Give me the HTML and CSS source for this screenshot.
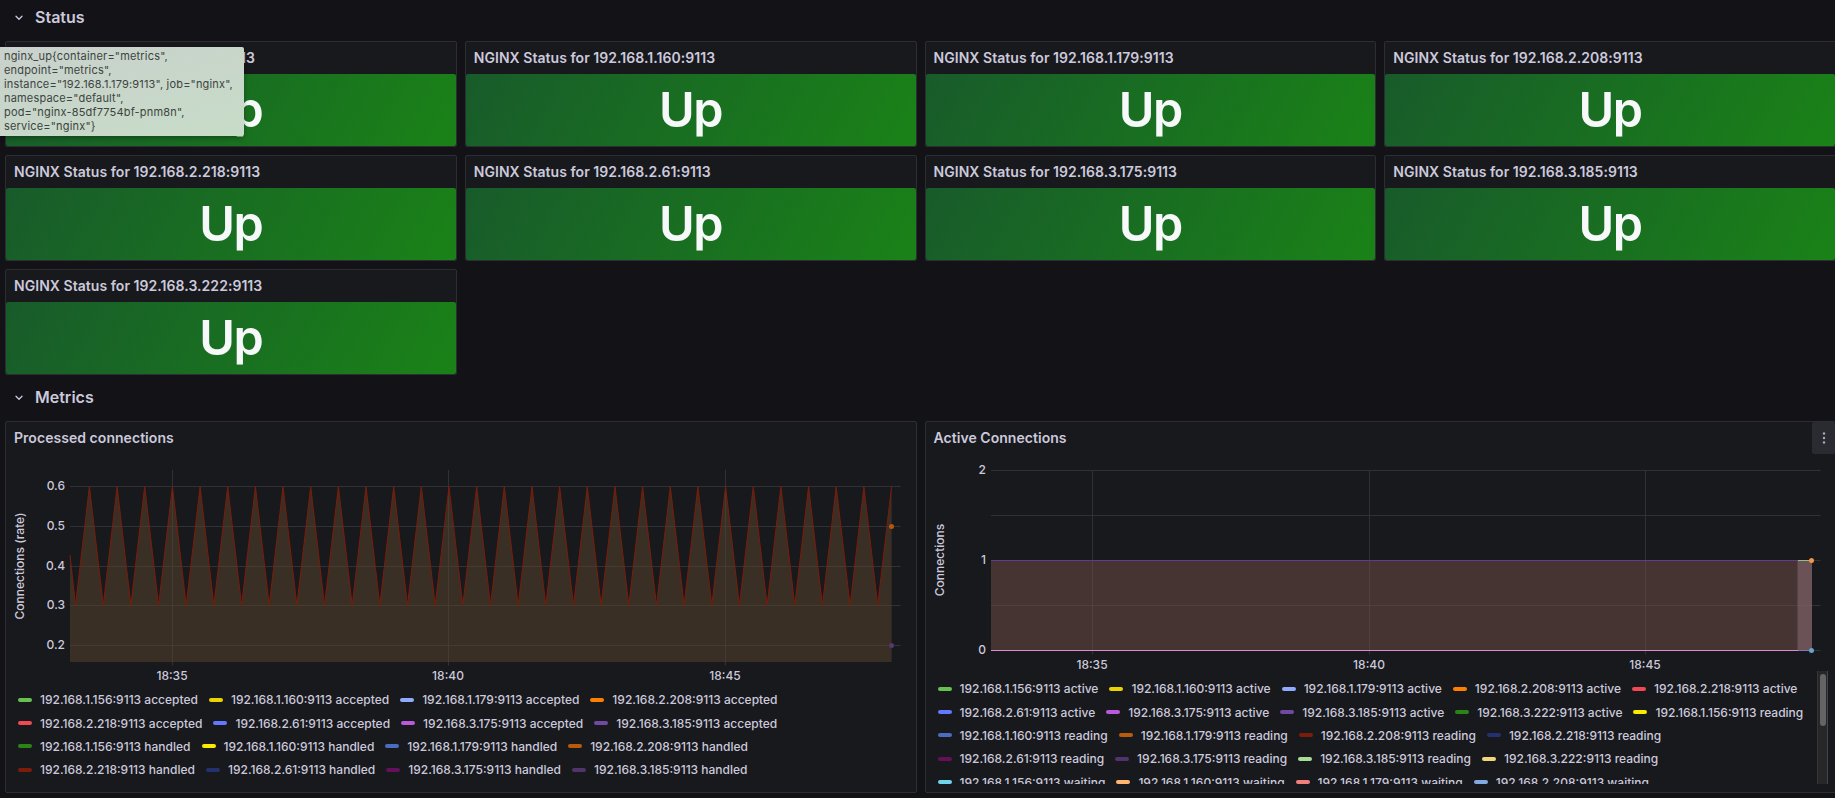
FILE: index.html
```html
<!DOCTYPE html>
<html lang="en">
<head>
<meta charset="utf-8">
<title>NGINX</title>
<link rel="stylesheet" href="styles.css">
</head>
<body>
<main class="dashboard">
  <header class="row-head">
    <svg class="chevron" width="8" height="6" viewBox="0 0 8 6"><path d="M1 1.2 L4 4.2 L7 1.2"/></svg>
    <h2 class="row-title">Status</h2>
  </header>
  <section class="stats" id="stats"></section>
  <header class="row-head row-head-second">
    <svg class="chevron" width="8" height="6" viewBox="0 0 8 6"><path d="M1 1.2 L4 4.2 L7 1.2"/></svg>
    <h2 class="row-title">Metrics</h2>
  </header>
  <section class="charts">
    <article class="panel chart-panel">
      <h3 class="panel-title">Processed connections</h3>
      <svg class="plot" width="910" height="233" viewBox="6 454 910 233">
        <g class="grid">
          <path d="M70 486.5H900.5M70 526.5H900.5M70 566.5H900.5M70 605.5H900.5M70 645.5H900.5"/>
          <path d="M172.5 470V665.5M448.5 470V665.5M725.5 470V665.5"/>
        </g>
        <path class="rate-fill" id="rate-fill"/>
        <path class="rate-line" id="rate-line"/>
        <circle cx="891.5" cy="526.5" r="2.5" fill="#b8570c"/>
        <circle cx="891.5" cy="645.5" r="2.5" fill="#56376f"/>
        <g class="axis axis-y">
          <text x="65" y="490">0.6</text><text x="65" y="530">0.5</text><text x="65" y="570">0.4</text><text x="65" y="609">0.3</text><text x="65" y="649">0.2</text>
        </g>
        <g class="axis axis-x">
          <text x="172" y="680">18:35</text><text x="448" y="680">18:40</text><text x="725" y="680">18:45</text>
        </g>
        <text class="axis axis-x" transform="translate(24 566) rotate(-90)">Connections (rate)</text>
      </svg>
      <div class="legend" id="legend-rate"></div>
    </article>
    <article class="panel chart-panel">
      <h3 class="panel-title">Active Connections</h3>
      <button class="menu" aria-label="Menu"><svg width="4" height="14" viewBox="0 0 4 14"><circle cx="2" cy="2.5" r="1.2"/><circle cx="2" cy="7" r="1.2"/><circle cx="2" cy="11.5" r="1.2"/></svg></button>
      <svg class="plot" width="910" height="217" viewBox="926 454 910 217">
        <g class="grid">
          <path d="M991 470.5H1820.5M991 515.5H1820.5M991 560.5H1820.5M991 605.5H1820.5M991 650.5H1820.5"/>
          <path d="M1092.5 470V654.5M1369.5 470V654.5M1645.5 470V654.5"/>
        </g>
        <path class="active-fill" d="M991 561H1812V650H991Z"/>
        <path class="active-tail" d="M1797.500 561H1812V650H1797.500Z"/>
        <path d="M991 560.5H1798" stroke="#643a90"/>
        <path d="M1798 560.5H1809" stroke="#8fc07c"/>
        <path d="M991 650.5H1798" stroke="#e08bd0"/>
        <path d="M1798 650.5H1810" stroke="#8b76b5"/>
        <circle cx="1811.500" cy="560.5" r="2.500" fill="#f29643"/>
        <circle cx="1811.500" cy="650.5" r="2.500" fill="#6aa3c9"/>
        <g class="axis axis-y">
          <text x="986" y="474">2</text><text x="986" y="564">1</text><text x="986" y="654">0</text>
        </g>
        <g class="axis axis-x">
          <text x="1092" y="669">18:35</text><text x="1369" y="669">18:40</text><text x="1645" y="669">18:45</text>
        </g>
        <text class="axis axis-x" transform="translate(944 560) rotate(-90)">Connections</text>
      </svg>
      <div class="legend-scroll">
        <div class="legend" id="legend-active"></div>
        <div class="scrollbar"><div class="thumb"></div></div>
      </div>
    </article>
  </section>
  <div class="tooltip">nginx_up{container="metrics",<br>endpoint="metrics",<br>instance="192.168.1.179:9113", job="nginx",<br>namespace="default",<br>pod="nginx-85df7754bf-pnm8n",<br>service="nginx"}</div>
</main>
<script src="app.js"></script>
</body>
</html>
```
FILE: styles.css
```css
* { box-sizing: border-box; }
body {
  margin: 0;
  height: 798px;
  overflow: hidden;
  background: #121217;
  color: #ccc9dc;
  font-family: Inter, "Liberation Sans", sans-serif;
}
.dashboard { position: relative; width: 1836px; padding-left: 5px; }
.row-head { display: flex; align-items: center; gap: 12px; height: 34px; margin-bottom: 7px; padding-left: 10px; }
.row-head-second { margin-top: 5px; }
.chevron { fill: none; stroke: #ccc9dc; stroke-width: 1.3; stroke-linecap: round; stroke-linejoin: round; margin-top: 2px; }
.row-title { margin: 0; font-size: 16px; font-weight: 600; }
.stats { display: grid; grid-template-columns: repeat(4, 1fr); grid-auto-rows: 106px; gap: 8px; }
.panel { display: flex; flex-direction: column; min-width: 0; background: #18191d; border: 1px solid #2d2e33; border-radius: 2px; }
.panel-title { flex: none; margin: 0; height: 32px; padding-left: 8px; font-size: 14px; line-height: 32px; font-weight: 600; letter-spacing: 0.045px; white-space: nowrap; }
.stat-value {
  flex: 1;
  display: flex;
  align-items: center;
  justify-content: center;
  padding-bottom: 1px;
  border-radius: 2px;
  background: linear-gradient(120deg, #185b2b, #1a8217);
  color: #f7f8fa;
  font-size: 48.5px;
  font-weight: 600;
  letter-spacing: -1.3px;
}
.charts { display: grid; grid-template-columns: 1fr 1fr; gap: 8px; height: 372px; }
.chart-panel { position: relative; }
.plot { flex: none; display: block; }
.grid path { fill: none; stroke: #303136; }
.rate-fill { fill: #5c452c; fill-opacity: 0.5; }
.rate-line { fill: none; stroke: #7c1c0a; stroke-width: 1; }
.active-fill { fill: #724f46; fill-opacity: 0.5; }
.active-tail { fill: #846870; fill-opacity: 0.6; }
.axis { fill: #ccc9dc; font-size: 12px; font-weight: 500; }
.axis-y { text-anchor: end; }
.axis-x { text-anchor: middle; }
.legend { display: flex; flex-direction: column; padding: 1px 0 0 12px; }
.legend-row { flex: none; display: flex; gap: 11px; height: 23.4px; align-items: center; }
.legend-item { display: flex; align-items: center; gap: 8px; font-size: 12px; font-weight: 500; white-space: nowrap; }
.swatch { width: 14px; height: 4px; border-radius: 2px; }
.legend-scroll { display: flex; justify-content: space-between; height: 113px; overflow: hidden; }
.legend-scroll .legend { padding-top: 6px; }
.scrollbar { width: 11px; height: 113px; margin-right: 7px; padding: 3px 2px; background: #272727; border-left: 1px solid #34343a; border-right: 1px solid #44444a; }
.thumb { width: 6px; height: 52px; border-radius: 3px; background: #646464; }
.menu { position: absolute; top: 0; right: 0; width: 23px; height: 32px; padding: 0 0 0 1px; border: 0; border-radius: 2px; background: #2a2a31; display: flex; align-items: center; justify-content: center; }
.menu svg { fill: #a9a9b8; }
.tooltip {
  position: absolute;
  left: 0;
  top: 47px;
  width: 244px;
  height: 89px;
  padding: 2px 4px;
  border-radius: 0 2px 2px 0;
  background: linear-gradient(165deg, #c9d1cc, #c7dcc8);
  box-shadow: 0 2px 5px rgba(0, 0, 0, 0.3);
  color: #3c4440;
  font-size: 11px;
  letter-spacing: 0.18px;
  line-height: 14px;
  white-space: nowrap;
}
```
FILE: app.js
```js
const ips = ["192.168.1.156", "192.168.1.160", "192.168.1.179", "192.168.2.208", "192.168.2.218",
  "192.168.2.61", "192.168.3.175", "192.168.3.185", "192.168.3.222"].map(ip => ip + ":9113");

document.getElementById("stats").innerHTML = ips.map(ip =>
  `<article class="panel"><h3 class="panel-title">NGINX Status for ${ip}</h3><div class="stat-value">Up</div></article>`).join("");

// Each entry: [host index, metric, colour]
function legend(id, rows) {
  document.getElementById(id).innerHTML = rows.map(row => `<div class="legend-row">` + row.map(([i, metric, color]) =>
    `<span class="legend-item"><i class="swatch" style="background:${color}"></i><span>${ips[i]} ${metric}</span></span>`).join("") + `</div>`).join("");
}
legend("legend-rate", [
  [[0, "accepted", "#65c150"], [1, "accepted", "#ebd300"], [2, "accepted", "#8faaff"], [3, "accepted", "#ff7f00"]],
  [[4, "accepted", "#f24755"], [5, "accepted", "#6478ff"], [6, "accepted", "#b959dc"], [7, "accepted", "#704aa0"]],
  [[0, "handled", "#2a8516"], [1, "handled", "#faea00"], [2, "handled", "#4b6cbe"], [3, "handled", "#b85c0c"]],
  [[4, "handled", "#7c1c0a"], [5, "handled", "#25306f"], [6, "handled", "#64105a"], [7, "handled", "#51346b"]]
]);
legend("legend-active", [
  [[0, "active", "#65c150"], [1, "active", "#ebd300"], [2, "active", "#8faaff"], [3, "active", "#ff7f00"], [4, "active", "#f24755"]],
  [[5, "active", "#6478ff"], [6, "active", "#b959dc"], [7, "active", "#704aa0"], [8, "active", "#2a8516"], [0, "reading", "#faea00"]],
  [[1, "reading", "#4b6cbe"], [2, "reading", "#b85c0c"], [3, "reading", "#7c1c0a"], [4, "reading", "#25306f"]],
  [[5, "reading", "#64105a"], [6, "reading", "#51346b"], [7, "reading", "#a8dc96"], [8, "reading", "#f2d67c"]],
  [[0, "waiting", "#70d3ea"], [1, "waiting", "#ffb570"], [2, "waiting", "#f0807c"], [3, "waiting", "#82aae0"]]
]);

// Sawtooth between 0.3 and 0.6
const step = 27.66;
let wave = "M70 555L75.5 605.5";
for (let k = 0; k < 30; k++) {
  const x = 172.4 + (k - 3) * step;
  wave += `L${x.toFixed(1)} 486.5`;
  if (k < 29) wave += `L${(x + step / 2).toFixed(1)} 605.5`;
}
document.getElementById("rate-line").setAttribute("d", wave);
document.getElementById("rate-fill").setAttribute("d", wave + "V662H70Z");
```
